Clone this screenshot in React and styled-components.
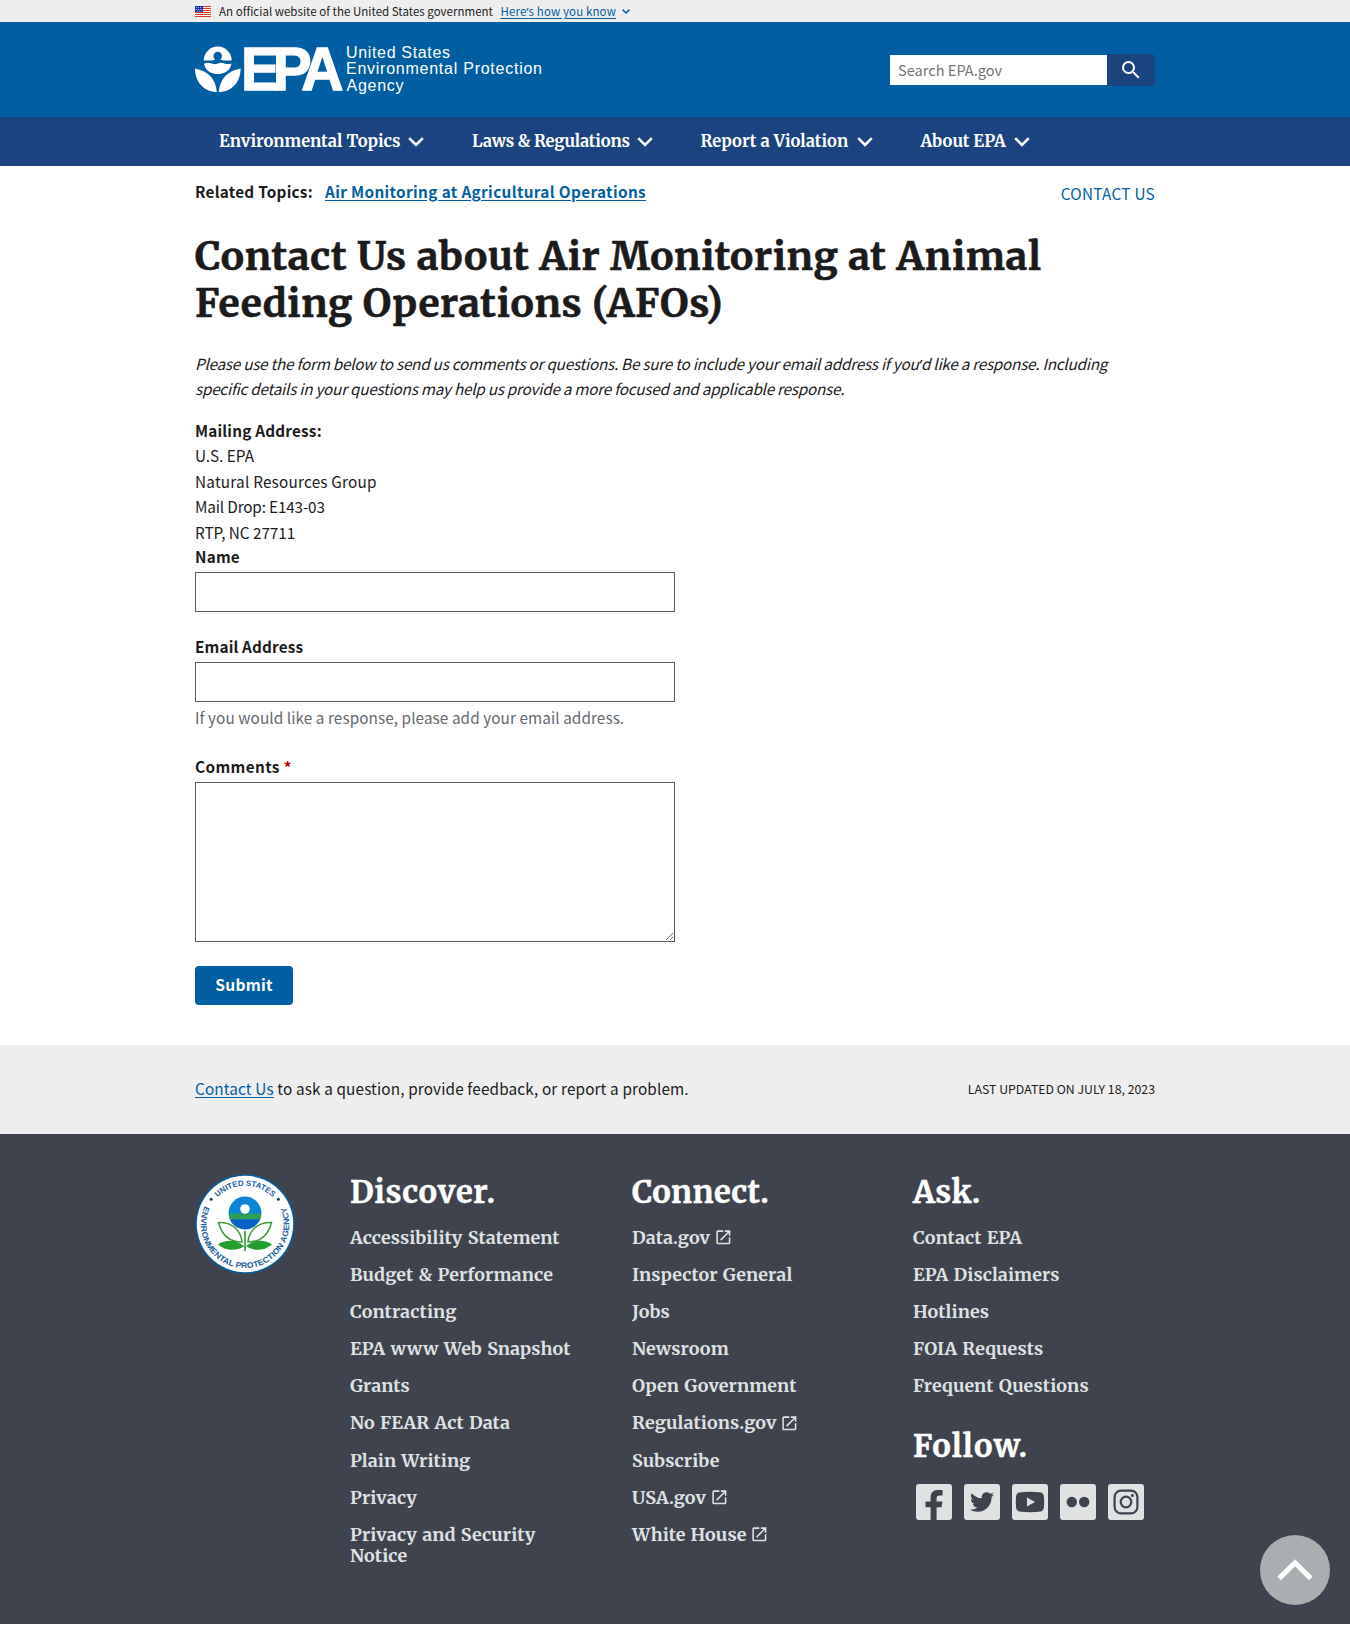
import React from 'react';
import styled, { createGlobalStyle } from 'styled-components';
import { FaTwitter } from 'react-icons/fa';

const sans = '"Noto Sans CJK SC", "Noto Sans", sans-serif';
const serif = 'Merriweather, "DejaVu Serif Condensed", "DejaVu Serif", serif';

const GlobalStyle = createGlobalStyle`
  *, *::before, *::after { box-sizing: border-box; }
  body {
    margin: 0;
    background: #fff;
    color: #1b1b1b;
    font-family: ${sans};
    font-size: 15.3px;
    line-height: 25.44px;
    overflow-x: hidden;
  }
  ul { list-style: none; margin: 0; padding: 0; }
  svg { display: block; flex: none; overflow: visible; }
`;

const Wrap = styled.div`
  width: 960px;
  margin: 0 auto;
`;

const Tracked = styled.span`
  letter-spacing: ${(p) => p.$track || 0}px;
`;

const Link = styled.a`
  color: #005ea2;
  text-decoration: underline;
  text-underline-offset: 2px;
  letter-spacing: ${(p) => p.$track || 0}px;
`;

const Apostrophe = styled.span`
  font-family: "Noto Sans", sans-serif;
  line-height: 0;
`;

/* Government banner */
const Banner = styled.div`
  height: 22px;
  background: #eee;
  font-size: 11.5px;
  line-height: 22px;
`;
const BannerRow = styled(Wrap)`
  display: flex;
  align-items: center;
  height: 22px;
  white-space: nowrap;
  svg:first-child { margin-right: 8px; }
  a { margin-left: 7.5px; }
  svg:last-child { margin-left: 6px; }
`;

/* Masthead */
const Header = styled.header`
  height: 95px;
  background: #005ea2;
`;
const HeaderRow = styled(Wrap)`
  display: flex;
  justify-content: space-between;
  align-items: flex-start;
  padding-top: 23px;
`;
const Search = styled.form`
  display: flex;
  align-items: center;
  margin-top: 9px;
`;
const SearchInput = styled.input`
  width: 217px;
  height: 30px;
  padding: 0 8px 2px;
  border: 0;
  border-radius: 0;
  background: #fff;
  font: 14.6px ${sans};
  &::placeholder { color: #757575; opacity: 1; }
`;
const SearchButton = styled.button`
  display: flex;
  align-items: center;
  justify-content: center;
  width: 48px;
  height: 32px;
  padding: 0;
  border: 0;
  border-radius: 0 4px 4px 0;
  background: #1a4480;
`;

/* Primary navigation */
const Nav = styled.nav`
  height: 49px;
  background: #1a4480;
`;
const NavList = styled(Wrap)`
  display: flex;
  gap: 48px;
  height: 49px;
  padding-left: 24px;
`;
const NavItem = styled.div`
  display: flex;
  align-items: center;
  justify-content: space-between;
  width: ${(p) => p.$width}px;
  color: #fff;
  font: 700 16.5px/49px ${serif};
  letter-spacing: ${(p) => p.$track}px;
  white-space: nowrap;
`;

/* Page content */
const Main = styled(Wrap)`
  height: 879px;
`;
const TopicRow = styled.div`
  display: flex;
  justify-content: space-between;
  height: 67px;
  padding-top: 13px;
`;
const Topics = styled.div`
  display: flex;
  gap: 12px;
  font-weight: 700;
`;
const ContactLink = styled.a`
  padding-top: 2px;
  color: #005ea2;
  letter-spacing: 0.3px;
`;
const Title = styled.h1`
  margin: 0 0 24px;
  font: 700 39px/47px ${serif};
  letter-spacing: 0.62px;
  -webkit-text-stroke: 0.6px currentColor;
`;
const Intro = styled.p`
  margin: 0 0 16px;
  font-style: italic;
  letter-spacing: -0.25px;
  white-space: nowrap;
`;
const Address = styled.address`
  font-style: normal;
  height: 127px;
`;
const Field = styled.div`
  display: flex;
  flex-direction: column;
  margin-bottom: 23px;
`;
const Label = styled.label`
  height: 27px;
  font-weight: 700;
  line-height: 22px;
  letter-spacing: ${(p) => p.$track || 0}px;
`;
const Required = styled.span`
  margin-left: 4px;
  color: #b50909;
`;
const Input = styled.input`
  width: 480px;
  height: 40px;
  border: 1px solid #565c65;
  border-radius: 0;
`;
const TextArea = styled.textarea`
  width: 480px;
  height: 160px;
  border: 1px solid #565c65;
  border-radius: 0;
  resize: vertical;
`;
const Hint = styled.div`
  height: 30px;
  padding-top: 3px;
  color: #666a70;
  letter-spacing: 0.08px;
`;
const Submit = styled.button`
  display: block;
  width: 98px;
  height: 39px;
  margin-top: 24px;
  padding: 0 0 2px;
  border: 0;
  border-radius: 4px;
  background: #005ea2;
  color: #fff;
  font: 700 15.6px ${sans};
  letter-spacing: 0.25px;
`;

/* Page footnote strip */
const Strip = styled.div`
  height: 89px;
  background: #eee;
`;
const StripRow = styled(Wrap)`
  display: flex;
  justify-content: space-between;
  align-items: center;
  height: 87px;
`;
const Updated = styled.div`
  padding-top: 2px;
  font-size: 12.3px;
`;

/* Footer */
const Footer = styled.footer`
  height: 490px;
  background: #3e434e;
`;
const FooterGrid = styled(Wrap)`
  display: grid;
  grid-template-columns: 155px 282px 281px 242px;
  padding-top: 40px;
`;
const FooterTitle = styled.h2`
  margin: ${(p) => p.$top || 0}px 0 ${(p) => p.$bottom || 17}px;
  color: #fff;
  font: 700 31px/36px ${serif};
  letter-spacing: ${(p) => p.$track}px;
  -webkit-text-stroke: 0.4px currentColor;
`;
const FooterList = styled.ul`
  color: #dfe1e2;
  font: 700 17.9px/21.1px ${serif};
  letter-spacing: 0.11px;
  word-spacing: 0.8px;
`;
const FooterItem = styled.li`
  display: flex;
  align-items: center;
  gap: 3.5px;
  max-width: 226px;
  margin-bottom: 16px;
  &:last-child { margin-bottom: 0; }
`;
const Social = styled.div`
  display: flex;
  gap: 12px;
  margin: 0 0 0 2.5px;
`;
const SocialTile = styled.a`
  display: flex;
  align-items: center;
  justify-content: center;
  width: 36px;
  height: 36px;
  border-radius: 3px;
  background: #dfe1e2;
  color: #3e434e;
`;
const BackToTop = styled.a`
  position: fixed;
  right: 20px;
  bottom: 20px;
  display: flex;
  align-items: center;
  justify-content: center;
  width: 70px;
  height: 70px;
  border-radius: 50%;
  background: #a9aeb1;
`;

const Flag = () => (
  <svg width="16" height="11" viewBox="0 0 16 11">
    <rect width="16" height="11" fill="#fff" />
    {[0, 2, 4, 6, 8, 10].map((y) => (
      <rect key={y} y={y} width="16" height="1" fill="#db3e1f" />
    ))}
    <rect width="8" height="6" fill="#1e33b1" />
    <path d="M1 1.5h6M1 3.5h6M2 5h5" stroke="#fff" strokeWidth=".7" strokeDasharray="1 1" />
  </svg>
);

const Chevron = ({ w = 16, h = 10, stroke = 2.6, color = '#fff' }) => (
  <svg width={w} height={h} viewBox="0 0 16 10">
    <path d="M1.2 1.2L8 8L14.8 1.2" fill="none" stroke={color} strokeWidth={stroke} />
  </svg>
);

const Logo = () => (
  <svg width="350" height="60" viewBox="0 0 350 60" fill="#fff">
    <path d="M8.7 15.6A14 14 0 0 1 36.7 15.6H28.5L25.2 14.6A4.3 4.3 0 1 0 20.2 14.6L17 15.6Z" />
    <path d="M9 18.4Q13 17.2 16.5 18.4T23 18.4T29.5 18.4T36.5 18.4C35.5 25 30 29 22.8 29S10 25 9 18.4Z" />
    <path d="M0 23.4C13 26 20.5 33 21.9 47C9 46.8 0 37 0 23.4Z" />
    <path d="M45.6 23.4C32.6 26 25.1 33 23.7 47C36.6 46.8 45.6 37 45.6 23.4Z" />
    <g
      transform="translate(45.9 45.2) scale(.95 1)"
      fontFamily="Liberation Sans, Arial, sans-serif"
      fontSize="61.5"
      fontWeight="700"
      stroke="#fff"
      strokeWidth="1.4"
    >
      <text x="0 33.6 63.6" y="0">EPA</text>
    </g>
    <g fontFamily="Liberation Sans, Arial, sans-serif" fontSize="16">
      <text x="151" y="12.6" textLength="104">United States</text>
      <text x="151" y="29.2" textLength="196">Environmental Protection</text>
      <text x="151.5" y="45.8" textLength="57">Agency</text>
    </g>
  </svg>
);

const Magnifier = () => (
  <svg width="24" height="24" viewBox="0 0 24 24" fill="#fff">
    <path d="M15.5 14h-.79l-.28-.27A6.47 6.47 0 0 0 16 9.5 6.5 6.5 0 1 0 9.5 16c1.61 0 3.09-.59 4.23-1.57l.27.28v.79l5 4.99L20.49 19l-4.99-5zm-6 0a4.5 4.5 0 1 1 0-9 4.5 4.5 0 0 1 0 9z" />
  </svg>
);

const External = () => (
  <svg width="18.7" height="18.7" viewBox="0 0 24 24" fill="currentColor">
    <path d="M19 19H5V5h7V3H5a2 2 0 0 0-2 2v14a2 2 0 0 0 2 2h14c1.1 0 2-.9 2-2v-7h-2v7zM14 3v2h3.59l-9.83 9.83 1.41 1.41L19 6.41V10h2V3h-7z" />
  </svg>
);

const Seal = () => (
  <svg width="100" height="100" viewBox="-50 -50 100 100">
    <circle r="50" fill="#0b5c96" />
    <circle r="48.2" fill="#fff" />
    <path id="seal-top" d="M-38.2 0A38.2 38.2 0 0 1 38.2 0" fill="none" />
    <path id="seal-bottom" d="M-39.2 -20.5A44.2 44.2 0 1 0 39.2 -20.5" fill="none" />
    <g fill="#175e9c" fontFamily="Liberation Sans, Arial, sans-serif" fontWeight="700">
      <text fontSize="8">
        <textPath href="#seal-top" startOffset="29.5" textLength="61" lengthAdjust="spacingAndGlyphs">
          UNITED STATES
        </textPath>
      </text>
      <text fontSize="8">
        <textPath href="#seal-bottom" startOffset="3" textLength="174" lengthAdjust="spacingAndGlyphs">
          ENVIRONMENTAL PROTECTION AGENCY
        </textPath>
      </text>
    </g>
    <circle cx="-33.8" cy="-24.7" r="1.5" fill="#123f6d" />
    <circle cx="33.4" cy="-24.7" r="1.5" fill="#123f6d" />
    <circle cy="-11" r="16.4" fill="#0a84d6" />
    <path d="M-16.4 -10.6H16.4Q16.2 -7 15 -4.6H-15Q-16.2 -7 -16.4 -10.6Z" fill="#2f9e55" />
    <path d="M-15 -4.6H15A16.4 16.4 0 0 1 -15 -4.6Z" fill="#0a62c4" />
    <circle cy="-15" r="4.8" fill="#fff" />
    <g fill="#fff" stroke="#3a9a3a" strokeWidth="1.5">
      <path d="M-26.5 -1.5C-12 -2 -4 7 -3 18C-15 18 -23 12 -26.5 -1.5Z" />
      <path d="M26.5 -1.5C12 -2 4 7 3 18C15 18 23 12 26.5 -1.5Z" />
    </g>
    <path d="M-27 20.5C-19 14.5 -8 16 -1 22C-9 28 -20 26.5 -27 20.5ZM27 20.5C19 14.5 8 16 1 22C9 28 20 26.5 27 20.5Z" fill="#259f2c" />
    <path d="M0 7V27" stroke="#3a9a3a" strokeWidth="1.7" />
  </svg>
);

const Facebook = () => (
  <svg width="36" height="36" viewBox="0 0 36 36" fill="currentColor">
    <path d="M14.6 36V23.2H9.5V17.4H14.6V13.6C14.6 8.6 17.4 6 22 6H26.6V11.6H23.6C21.2 11.6 20.6 12.6 20.6 14.6V17.4H26.4L25.5 23.2H20.6V36Z" />
  </svg>
);
const YouTube = () => (
  <svg width="30" height="22" viewBox="0 0 30 22">
    <path d="M4 1.5Q15 .2 26 1.5Q28.6 2 28.8 5Q29.6 11 28.8 17Q28.6 20 26 20.5Q15 21.8 4 20.5Q1.4 20 1.2 17Q.4 11 1.2 5Q1.4 2 4 1.5Z" fill="currentColor" />
    <path d="M12 6.5L20 11L12 15.5Z" fill="#dfe1e2" />
  </svg>
);
const Flickr = () => (
  <svg width="24" height="12" viewBox="0 0 24 12" fill="currentColor">
    <circle cx="5.8" cy="6" r="5.2" />
    <circle cx="18.2" cy="6" r="5.2" />
  </svg>
);
const Instagram = () => (
  <svg width="26" height="26" viewBox="0 0 26 26" fill="none" stroke="currentColor" strokeWidth="2.2">
    <rect x="1.6" y="1.6" width="22.8" height="22.8" rx="6.4" />
    <circle cx="13" cy="13" r="5.3" />
    <circle cx="19.4" cy="6.6" r="1.5" fill="currentColor" stroke="none" />
  </svg>
);

const navItems = [
  ['Environmental Topics', 205, 0.03],
  ['Laws & Regulations', 180.5, -0.18],
  ['Report a Violation', 172, 0.05],
  ['About EPA', 109, 0],
];

const discover = [
  'Accessibility Statement',
  'Budget & Performance',
  'Contracting',
  'EPA www Web Snapshot',
  'Grants',
  'No FEAR Act Data',
  'Plain Writing',
  'Privacy',
  'Privacy and Security Notice',
];
const connect = [
  'Data.gov',
  'Inspector General',
  'Jobs',
  'Newsroom',
  'Open Government',
  'Regulations.gov',
  'Subscribe',
  'USA.gov',
  'White House',
];
const ask = ['Contact EPA', 'EPA Disclaimers', 'Hotlines', 'FOIA Requests', 'Frequent Questions'];
const external = ['Data.gov', 'Regulations.gov', 'USA.gov', 'White House'];

const Links = ({ items }) => (
  <FooterList>
    {items.map((item) => (
      <FooterItem key={item}>
        {item}
        {external.includes(item) && <External />}
      </FooterItem>
    ))}
  </FooterList>
);

export default function App() {
  return (
    <>
      <GlobalStyle />
      <Banner>
        <BannerRow>
          <Flag />
          <Tracked $track={0.02}>An official website of the United States government</Tracked>
          <Link $track={0.13}>
            Here<Apostrophe>’</Apostrophe>s how you know
          </Link>
          <Chevron w={8} h={5} stroke={3} color="#005ea2" />
        </BannerRow>
      </Banner>
      <Header>
        <HeaderRow>
          <Logo />
          <Search>
            <SearchInput placeholder="Search EPA.gov" />
            <SearchButton type="button">
              <Magnifier />
            </SearchButton>
          </Search>
        </HeaderRow>
      </Header>
      <Nav>
        <NavList>
          {navItems.map(([name, width, track]) => (
            <NavItem key={name} $width={width} $track={track}>
              {name}
              <Chevron />
            </NavItem>
          ))}
        </NavList>
      </Nav>
      <Main as="main">
        <TopicRow>
          <Topics>
            <Tracked $track={0.26}>Related Topics:</Tracked>
            <Link $track={0.37}>Air Monitoring at Agricultural Operations</Link>
          </Topics>
          <ContactLink>CONTACT US</ContactLink>
        </TopicRow>
        <Title>Contact Us about Air Monitoring at Animal Feeding Operations (AFOs)</Title>
        <Intro>
          Please use the form below to send us comments or questions. Be sure to include your email
          address if you<Apostrophe>’</Apostrophe>d like a response. Including
          <br />
          specific details in your questions may help us provide a more focused and applicable
          response.
        </Intro>
        <Address>
          <Tracked as="strong" $track={0.2}>Mailing Address:</Tracked>
          <br />
          U.S. EPA
          <br />
          <Tracked $track={0.22}>Natural Resources Group</Tracked>
          <br />
          <Tracked $track={-0.15}>Mail Drop: E143-03</Tracked>
          <br />
          <Tracked $track={-0.05}>RTP, NC 27711</Tracked>
        </Address>
        <Field>
          <Label $track={0.2}>Name</Label>
          <Input />
        </Field>
        <Field>
          <Label $track={0.15}>Email Address</Label>
          <Input />
          <Hint>If you would like a response, please add your email address.</Hint>
        </Field>
        <Field>
          <Label $track={0.4}>
            Comments<Required>*</Required>
          </Label>
          <TextArea />
        </Field>
        <Submit type="button">Submit</Submit>
      </Main>
      <Strip>
        <StripRow>
          <Tracked as="div" $track={0.14}>
            <Link $track={0.14}>Contact Us</Link> to ask a question, provide feedback, or report a
            problem.
          </Tracked>
          <Updated>LAST UPDATED ON JULY 18, 2023</Updated>
        </StripRow>
      </Strip>
      <Footer>
        <FooterGrid>
          <Seal />
          <section>
            <FooterTitle $track={0.65}>Discover.</FooterTitle>
            <Links items={discover} />
          </section>
          <section>
            <FooterTitle $track={0.3}>Connect.</FooterTitle>
            <Links items={connect} />
          </section>
          <section>
            <FooterTitle $track={0.4}>Ask.</FooterTitle>
            <Links items={ask} />
            <FooterTitle $track={1.1} $top={32} $bottom={20}>Follow.</FooterTitle>
            <Social>
              <SocialTile><Facebook /></SocialTile>
              <SocialTile><FaTwitter size={24} /></SocialTile>
              <SocialTile><YouTube /></SocialTile>
              <SocialTile><Flickr /></SocialTile>
              <SocialTile><Instagram /></SocialTile>
            </Social>
          </section>
        </FooterGrid>
      </Footer>
      <BackToTop>
        <svg width="36" height="22" viewBox="0 0 36 22">
          <path d="M2.2 19.4L18 3.8L33.8 19.4" fill="none" stroke="#fff" strokeWidth="5" />
        </svg>
      </BackToTop>
    </>
  );
}
